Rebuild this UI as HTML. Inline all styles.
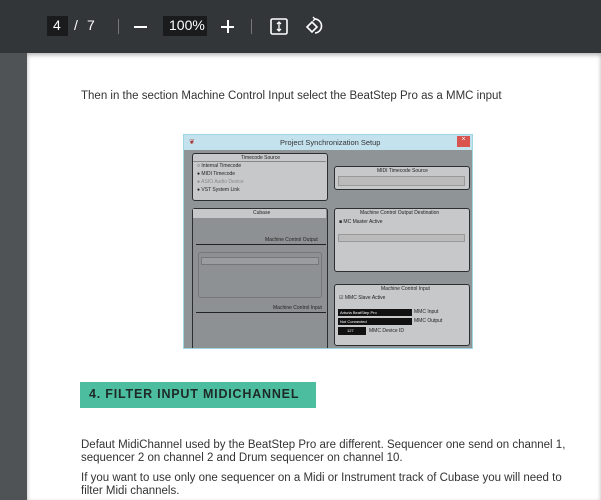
<!DOCTYPE html>
<html><head><meta charset="utf-8"><style>
*{margin:0;padding:0;box-sizing:border-box}
body{width:601px;height:500px;overflow:hidden;background:#fff;font-family:"Liberation Sans",sans-serif;position:relative}
.a{position:absolute}
#tb{left:0;top:0;width:601px;height:53px;background:#323639;color:#fff;font-size:14px}
#strip{left:0;top:53px;width:27px;height:447px;background:#4f5355}
#page{left:27px;top:53px;width:574px;height:447px;background:#fff;box-shadow:0 2px 4px rgba(0,0,0,.3) inset}
.t{color:#333;font-size:11.5px}
.p{border-radius:3px;border:1.5px solid #2c2e30}
.s{font-size:5px;color:#222;white-space:nowrap}
</style></head><body>
<div id="tb" class="a">
 <div class="a" style="left:47px;top:16px;width:21px;height:20px;background:#191b1c"></div>
 <div class="a" style="left:53px;top:17px">4</div>
 <div class="a" style="left:74px;top:17px">/</div>
 <div class="a" style="left:87px;top:17px">7</div>
 <div class="a" style="left:118px;top:19px;width:1px;height:15px;background:#777"></div>
 <div class="a" style="left:134px;top:26px;width:13px;height:1.5px;background:#fff"></div>
 <div class="a" style="left:163px;top:16px;width:44px;height:20px;background:#191b1c"></div>
 <div class="a" style="left:169px;top:17px">100%</div>
 <div class="a" style="left:221px;top:26px;width:13px;height:1.5px;background:#fff"></div>
 <div class="a" style="left:227px;top:20px;width:1.5px;height:13px;background:#fff"></div>
 <div class="a" style="left:251px;top:19px;width:1px;height:15px;background:#777"></div>
 <svg class="a" style="left:270px;top:18px" width="18" height="17" viewBox="0 0 18 17"><rect x="1" y="1" width="16" height="15" rx="1.5" fill="none" stroke="#fff" stroke-width="1.6"/><path d="M9 4v9M7 6l2-2 2 2M7 11l2 2 2-2" stroke="#fff" stroke-width="1.3" fill="none"/></svg>
 <svg class="a" style="left:305px;top:16px" width="20" height="20" viewBox="0 0 20 20"><path d="M2 11l5-5 5 5-5 5z" fill="none" stroke="#fff" stroke-width="1.6"/><path d="M9 3a7 7 0 1 1 1 14" fill="none" stroke="#fff" stroke-width="1.6"/><path d="M8 1l2 2-2 2" fill="none" stroke="#fff" stroke-width="1.4"/></svg>
</div>
<div id="strip" class="a"></div>
<div id="page" class="a"></div>
<div class="a t" style="left:81px;top:90px">Then in the section Machine Control Input select the BeatStep Pro as a MMC input</div>

<div class="a" style="left:183px;top:134px;width:290px;height:215px;background:#8f9497;border:1px solid #9fd6e6;overflow:hidden">
 <div class="a" style="left:0;top:0;width:288px;height:15px;background:#c4e2ee"></div>
 <div class="a" style="left:96px;top:3px;font-size:7.5px;color:#333">Project Synchronization Setup</div>
 <div class="a" style="left:273px;top:1px;width:13px;height:11px;background:#d9534f;color:#fff;font-size:7px;text-align:center">×</div>
 <div class="a" style="left:5px;top:3px;font-size:7px;color:#a33">❦</div>
 <div class="a p" style="left:8px;top:18px;width:136px;height:48px;background:#c6c8ca">
  <div class="a s" style="left:48px;top:1px">Timecode Source</div>
  <div class="a" style="left:0;top:7px;width:133px;height:1px;background:#888"></div>
  <div class="a s" style="left:4px;top:9px">○ Internal Timecode</div>
  <div class="a s" style="left:4px;top:17px">● MIDI Timecode</div>
  <div class="a s" style="left:4px;top:25px;color:#888">● ASIO Audio Device</div>
  <div class="a s" style="left:4px;top:33px">● VST System Link</div>
 </div>
 <div class="a p" style="left:150px;top:31px;width:136px;height:24px;background:#c6c8ca">
  <div class="a s" style="left:42px;top:1px">MIDI Timecode Source</div>
  <div class="a" style="left:3px;top:9px;width:127px;height:10px;background:#bbb;border:1px solid #999"></div>
 </div>
 <div class="a p" style="left:8px;top:73px;width:136px;height:150px;background:#8e9193">
  <div class="a" style="left:0;top:0;width:133px;height:9px;background:#c6c8ca"></div>
  <div class="a s" style="left:60px;top:1px">Cubase</div>
  <div class="a s" style="left:72px;top:28px">Machine Control Output</div>
  <div class="a" style="left:3px;top:35px;width:130px;height:1px;background:#222"></div>
  <div class="a" style="left:5px;top:43px;width:124px;height:46px;border:1px solid #777;border-radius:3px"></div>
  <div class="a" style="left:8px;top:48px;width:118px;height:8px;border:1px solid #777;background:#9a9d9f"></div>
  <div class="a s" style="left:80px;top:96px">Machine Control Input</div>
  <div class="a" style="left:3px;top:103px;width:130px;height:1px;background:#222"></div>
 </div>
 <div class="a p" style="left:150px;top:73px;width:136px;height:64px;background:#c6c8ca">
  <div class="a s" style="left:25px;top:1px">Machine Control Output Destination</div>
  <div class="a s" style="left:4px;top:10px">■ MC Master Active</div>
  <div class="a" style="left:3px;top:25px;width:127px;height:8px;background:#bbb;border:1px solid #999"></div>
 </div>
 <div class="a p" style="left:150px;top:149px;width:136px;height:62px;background:#c6c8ca">
  <div class="a s" style="left:46px;top:1px">Machine Control Input</div>
  <div class="a s" style="left:4px;top:10px">☑ MMC Slave Active</div>
  <div class="a" style="left:3px;top:24px;width:74px;height:7px;background:#111"></div>
  <div class="a s" style="left:5px;top:25px;color:#fff;font-size:4px">Arturia BeatStep Pro</div>
  <div class="a s" style="left:79px;top:24px">MMC Input</div>
  <div class="a" style="left:3px;top:33px;width:74px;height:7px;background:#111"></div>
  <div class="a s" style="left:5px;top:34px;color:#fff;font-size:4px">Not Connected</div>
  <div class="a s" style="left:79px;top:33px">MMC Output</div>
  <div class="a" style="left:3px;top:42px;width:28px;height:8px;background:#111"></div>
  <div class="a s" style="left:12px;top:43px;color:#fff;font-size:4px">127</div>
  <div class="a s" style="left:34px;top:43px">MMC Device ID</div>
 </div>
</div>

<div class="a" style="left:80px;top:382px;width:236px;height:26px;background:#4dbd9f"></div>
<div class="a" style="left:89px;top:387px;font-size:12.5px;font-weight:bold;letter-spacing:.8px;color:#1d2a27">4. FILTER INPUT MIDICHANNEL</div>
<div class="a t" style="left:81px;top:439px;line-height:13px;width:520px">Defaut MidiChannel used by the BeatStep Pro are different. Sequencer one send on channel 1,<br>sequencer 2 on channel 2 and Drum sequencer on channel 10.</div>
<div class="a t" style="left:81px;top:472px;line-height:13px;width:520px">If you want to use only one sequencer on a Midi or Instrument track of Cubase you will need to<br>filter Midi channels.</div>
</body></html>
